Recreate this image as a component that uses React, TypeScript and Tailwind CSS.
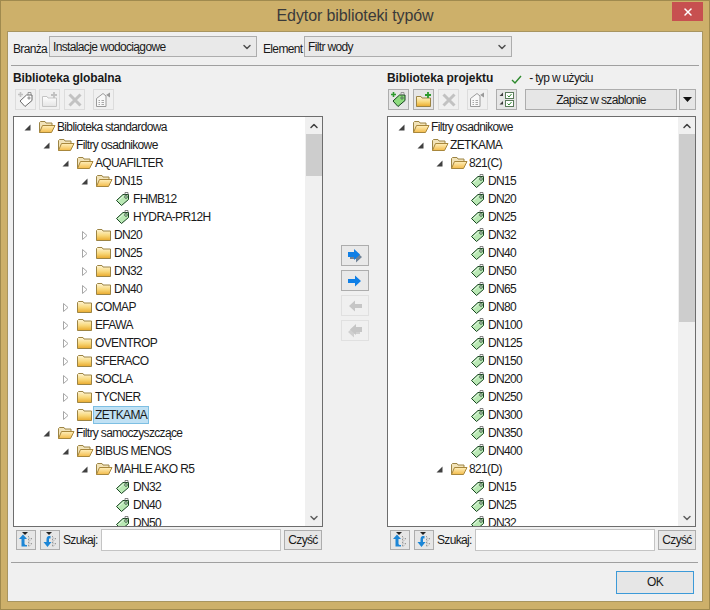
import React from "react";
import { ChevronDown, ChevronUp, X } from "lucide-react";

type Row = {
  level: number;
  label: string;
  kind: "open" | "closed" | "tag";
  selected?: boolean;
};

const leftRows: Row[] = [
  { level: 0, label: "Biblioteka standardowa", kind: "open" },
  { level: 1, label: "Filtry osadnikowe", kind: "open" },
  { level: 2, label: "AQUAFILTER", kind: "open" },
  { level: 3, label: "DN15", kind: "open" },
  { level: 4, label: "FHMB12", kind: "tag" },
  { level: 4, label: "HYDRA-PR12H", kind: "tag" },
  { level: 3, label: "DN20", kind: "closed" },
  { level: 3, label: "DN25", kind: "closed" },
  { level: 3, label: "DN32", kind: "closed" },
  { level: 3, label: "DN40", kind: "closed" },
  { level: 2, label: "COMAP", kind: "closed" },
  { level: 2, label: "EFAWA", kind: "closed" },
  { level: 2, label: "OVENTROP", kind: "closed" },
  { level: 2, label: "SFERACO", kind: "closed" },
  { level: 2, label: "SOCLA", kind: "closed" },
  { level: 2, label: "TYCNER", kind: "closed" },
  { level: 2, label: "ZETKAMA", kind: "closed", selected: true },
  { level: 1, label: "Filtry samoczyszczące", kind: "open" },
  { level: 2, label: "BIBUS MENOS", kind: "open" },
  { level: 3, label: "MAHLE AKO R5", kind: "open" },
  { level: 4, label: "DN32", kind: "tag" },
  { level: 4, label: "DN40", kind: "tag" },
  { level: 4, label: "DN50", kind: "tag" },
];

const tagsC = ["DN15", "DN20", "DN25", "DN32", "DN40", "DN50", "DN65", "DN80", "DN100", "DN125", "DN150", "DN200", "DN250", "DN300", "DN350", "DN400"];

const rightRows: Row[] = [
  { level: 0, label: "Filtry osadnikowe", kind: "open" },
  { level: 1, label: "ZETKAMA", kind: "open" },
  { level: 2, label: "821(C)", kind: "open" },
  ...tagsC.map((label) => ({ level: 3, label, kind: "tag" as const })),
  { level: 2, label: "821(D)", kind: "open" },
  { level: 3, label: "DN15", kind: "tag" },
  { level: 3, label: "DN25", kind: "tag" },
  { level: 3, label: "DN32", kind: "tag" },
];

// shared gradients for the folder drawings
const SvgDefs = () => (
  <svg width="0" height="0" className="block h-0 w-0">
    <defs>
      <linearGradient id="folderBody" x1="0" y1="0" x2="0" y2="1">
        <stop offset="0" stopColor="#fff6d8" />
        <stop offset="0.55" stopColor="#f8d778" />
        <stop offset="1" stopColor="#e9a92c" />
      </linearGradient>
      <linearGradient id="folderFront" x1="0" y1="0" x2="0" y2="1">
        <stop offset="0" stopColor="#fff0bd" />
        <stop offset="1" stopColor="#f3bb4a" />
      </linearGradient>
      <linearGradient id="folderPale" x1="0" y1="0" x2="0" y2="1">
        <stop offset="0" stopColor="#ffffff" />
        <stop offset="1" stopColor="#e4e4e4" />
      </linearGradient>
    </defs>
  </svg>
);

const FolderOpen = () => (
  <svg width="18" height="16" viewBox="0 0 18 16">
    <path d="M1.5 13.5V3.5L2.5 2.5H7L8 4H14V6.5" fill="#f2e3b8" stroke="#9c8444" />
    <path d="M1.5 13.5L4.5 6.5H17L13.5 13.5Z" fill="url(#folderFront)" stroke="#a8873c" />
  </svg>
);

const FolderClosed = () => (
  <svg width="18" height="16" viewBox="0 0 18 16">
    <path d="M1.5 13.5V3.5L2.5 2.5H7L8 4H15.5V13.5Z" fill="url(#folderBody)" stroke="#9c8444" />
  </svg>
);

const TagIcon = () => (
  <svg width="16" height="16" viewBox="0 0 16 16">
    <path d="M1.5 9.5L8 3.5H13.5V8.5L6.5 14.5Z" fill="#b9e8b4" stroke="#16441f" />
    <path d="M3.5 9.5L8.5 5" stroke="#eaffea" />
    <circle cx="11" cy="6" r="1.3" fill="#fff" stroke="#16441f" strokeWidth="0.8" />
    <path d="M10 4.5V1.5H13V4.5" fill="none" stroke="#666" strokeWidth="0.8" />
  </svg>
);

const TreeRow = ({ row }: { row: Row }) => (
  <div className="flex h-[18px] shrink-0 items-center" style={{ paddingLeft: row.level * 19 }}>
    <span className="flex w-[24px] shrink-0 items-center justify-end pr-[7px]">
      {row.kind === "open" && (
        <svg width="7" height="7" viewBox="0 0 7 7">
          <path d="M6.5 0.5V6.5H0.5Z" fill="#404040" />
        </svg>
      )}
      {row.kind === "closed" && (
        <svg width="6" height="9" viewBox="0 0 6 9">
          <path d="M0.5 0.5L5 4.5L0.5 8.5Z" fill="#fff" stroke="#a6a6a6" />
        </svg>
      )}
    </span>
    <span className="flex w-[18px] shrink-0 justify-center">
      {row.kind === "open" && <FolderOpen />}
      {row.kind === "closed" && <FolderClosed />}
      {row.kind === "tag" && <TagIcon />}
    </span>
    <span
      className={
        row.selected
          ? "-ml-px flex h-[18px] items-center whitespace-nowrap border border-[#7dbfe3] bg-[#c0e1f4] pl-px pr-px"
          : "whitespace-nowrap pl-px"
      }
    >
      {row.label}
    </span>
  </div>
);

const ScrollTrack = ({ thumb }: { thumb: string }) => (
  <div className="flex w-[17px] shrink-0 flex-col items-center bg-[#f0f0f0]">
    <div className="flex h-[17px] w-full shrink-0 items-center justify-center text-[#404040]">
      <ChevronUp size={12} strokeWidth={3} />
    </div>
    <div className={thumb} />
    <div className="flex-1" />
    <div className="flex h-4 w-full shrink-0 items-center justify-center text-[#606060]">
      <ChevronDown size={12} strokeWidth={3} />
    </div>
  </div>
);

const Tree = ({ rows, thumb }: { rows: Row[]; thumb: string }) => (
  <div className="flex h-[411px] overflow-hidden border border-[#6d6d6d] bg-white">
    <div className="flex min-w-0 flex-1 flex-col overflow-hidden pt-px">
      {rows.map((row, i) => (
        <TreeRow key={i} row={row} />
      ))}
    </div>
    <ScrollTrack thumb={thumb} />
  </div>
);

const ToolButton = ({
  children,
  active,
  className = "",
}: {
  children: React.ReactNode;
  active?: boolean;
  className?: string;
}) => (
  <div
    className={`flex h-[21px] w-[21px] shrink-0 items-center justify-center border ${
      active ? "border-[#adadad] bg-[#e6e6e6]" : "border-[#dcdcdc] bg-[#f0f0f0]"
    } ${className}`}
  >
    {children}
  </div>
);

const TagPlus = ({ on }: { on: boolean }) => (
  <svg width="17" height="17" viewBox="0 0 17 17">
    <path d="M3 10L9.5 4H15V9.5L8 15.5Z" fill={on ? "#8edb7e" : "#fff"} stroke={on ? "#16441f" : "#6a6a6a"} />
    <circle cx="12" cy="7" r="1.1" fill="#fff" stroke={on ? "#16441f" : "#6a6a6a"} strokeWidth="0.8" />
    <path d="M11 4V1.5H14V4" fill="none" stroke="#888" strokeWidth="0.8" />
    <path d="M3.5 1V6M1 3.5H6" stroke={on ? "#2d9a2d" : "#c0c0c0"} strokeWidth="1.6" />
  </svg>
);

const FolderPlus = ({ on }: { on: boolean }) => (
  <svg width="18" height="17" viewBox="0 0 18 17">
    <path
      d="M1.5 15.5V5.5H6L7 7H15.5V15.5Z"
      fill={on ? "url(#folderBody)" : "url(#folderPale)"}
      stroke={on ? "#9c8444" : "#c4c4c4"}
    />
    <path d="M13 1V7M10 4H16" stroke={on ? "#2d9a2d" : "#c0c0c0"} strokeWidth="1.8" />
  </svg>
);

const CrossIcon = () => (
  <svg width="16" height="16" viewBox="0 0 16 16">
    <path d="M2.5 2.5L13.5 13.5M13.5 2.5L2.5 13.5" stroke="#c2c2c2" strokeWidth="3" />
  </svg>
);

const PropsIcon = () => (
  <svg width="17" height="17" viewBox="0 0 17 17">
    <path d="M1.5 7.5L8 2.5L11 5V15.5H1.5Z" fill="#f8f8f8" stroke="#9a9a9a" />
    <path d="M3.5 9.5H5M6.5 9.5H9M3.5 11.5H5M6.5 11.5H9M3.5 13.5H5M6.5 13.5H9" stroke="#a8a8a8" />
    <path d="M11 4L15 1.5V6.5Z" fill="#9a9a9a" />
  </svg>
);

const ChecklistIcon = () => (
  <svg width="17" height="17" viewBox="0 0 17 17">
    <path d="M5 1.5V5H1.5Z" fill="#404040" />
    <path d="M5 10V13.5H1.5Z" fill="#404040" />
    <rect x="7.5" y="1.5" width="8" height="6" fill="#fff" stroke="#5a7a5a" />
    <rect x="7.5" y="9.5" width="8" height="6" fill="#fff" stroke="#5a7a5a" />
    <path d="M9.5 4.5L11 6L13.5 3M9.5 12.5L11 14L13.5 11" fill="none" stroke="#2d8a2d" />
  </svg>
);

const SortIcon = ({ down }: { down?: boolean }) => (
  <svg width="18" height="18" viewBox="0 0 18 18">
    <path d="M5 1H11L8 4Z" fill="#222" />
    <path d="M11.5 5V6M11.5 8V9M11.5 11V12M11.5 14V15M14.5 7V8M14.5 12V13" stroke="#999" />
    <path d="M12 6.5L14 8.5L12 10.5Z M12 11.5L14 13.5L12 15.5Z" fill="#fff" stroke="#999" strokeWidth="0.6" />
    {down ? (
      <path d="M8.5 5C5.5 5 5.5 7 5.5 11H2.5L6.5 16L10.5 11H8V7.5H9.5V5Z" fill="#1c86d6" />
    ) : (
      <path d="M4.5 15.5V8H2L6 3.5L10 8H7.5V12.5C7.5 13.5 8.5 14 10 14V15.5Z" fill="#1c86d6" />
    )}
  </svg>
);

const SearchBar = () => (
  <div className="mt-[2px] flex h-[22px] items-center">
    <div className="ml-[3px] flex gap-1">
      <ToolButton active className="!h-5 !w-5">
        <SortIcon />
      </ToolButton>
      <ToolButton active className="!h-5 !w-5">
        <SortIcon down />
      </ToolButton>
    </div>
    <span className="ml-[3px] w-[38px] shrink-0">Szukaj:</span>
    <div className="h-[22px] w-[180px] shrink-0 border border-[#c4c4c4] bg-white" />
    <div className="ml-[3px] flex h-5 w-[38px] shrink-0 items-center justify-center border border-[#adadad] bg-[#e6e6e6]">
      Czyść
    </div>
  </div>
);

const Combo = ({ value, width }: { value: string; width: string }) => (
  <div className={`flex h-[21px] items-center justify-between border border-[#adadad] bg-[#e9e9e9] pl-[3px] pr-[3px] ${width}`}>
    <span>{value}</span>
    <ChevronDown size={12} strokeWidth={3} className="text-[#505050]" />
  </div>
);

const ArrowButton = ({ on, double, left }: { on: boolean; double?: boolean; left?: boolean }) => (
  <div
    className={`flex h-[21px] w-7 items-center justify-center border ${
      on ? "border-[#adadad] bg-[#e9e9e9]" : "border-[#e0e0e0] bg-[#f0f0f0]"
    }`}
  >
    <svg width="16" height="16" viewBox="0 0 16 16" className={left ? "-scale-x-100" : ""}>
      {double && <path d="M3 7H9V3.5L15 9L9 14.5V11H3Z" fill={on ? "#6f8296" : "#d0d0d0"} />}
      <path
        d={double ? "M1 4H7V1L13 6.5L7 12V9H1Z" : "M1 6H8V2.5L14 8L8 13.5V10H1Z"}
        fill={on ? "#0f7fe6" : "#c6c6c6"}
      />
    </svg>
  </div>
);

export default function App() {
  return (
    <div
      className="flex h-[610px] w-[710px] flex-col overflow-hidden border border-[#a08a4e] bg-[#cdb06a] text-[12px] leading-none tracking-[-0.65px] text-[#1a1a1a]"
      style={{ fontFamily: '"Liberation Sans", Arial, sans-serif' }}
    >
      <SvgDefs />
      {/* Title bar */}
      <div className="flex h-[30px] shrink-0 items-start">
        <div className="flex-1 pt-[7px] pl-[37px] text-center text-[16px] tracking-[-0.1px] text-[#3a3a3a]">
          Edytor biblioteki typów
        </div>
        <div className="mr-[6px] mt-px flex h-[19px] w-[31px] items-center justify-center bg-[#c75050] text-white">
          <X size={12} strokeWidth={3} />
        </div>
      </div>

      {/* Client area */}
      <div className="mx-[6px] flex h-[571px] flex-col border border-[#a89560] bg-[#f0f0f0]">
        <div className="mx-[3px] flex h-[34px] shrink-0 items-end border-b border-[#a0a0a0] pb-[8px] pl-[2px]">
          <span className="w-[36px] self-center pt-[8px]">Branża</span>
          <Combo value="Instalacje wodociągowe" width="w-[208px]" />
          <span className="ml-[6px] w-[41px] self-center pt-[8px]">Element</span>
          <Combo value="Filtr wody" width="w-[208px]" />
        </div>

        <div className="flex flex-1 pl-[5px]">
          {/* Left library */}
          <div className="w-[310px] shrink-0">
            <div className="flex h-[23px] items-center pt-[1px] font-bold tracking-[-0.1px]">Biblioteka globalna</div>
            <div className="flex h-[21px] items-center">
              <ToolButton className="ml-[2px]"><TagPlus on={false} /></ToolButton>
              <ToolButton className="ml-[3px]"><FolderPlus on={false} /></ToolButton>
              <ToolButton className="ml-[4px]"><CrossIcon /></ToolButton>
              <ToolButton className="ml-[8px]"><PropsIcon /></ToolButton>
            </div>
            <div className="mt-[6px]">
              <Tree rows={leftRows} thumb="h-[42px] w-[16px] shrink-0 bg-[#cdcdcd]" />
            </div>
            <SearchBar />
          </div>

          {/* Transfer buttons */}
          <div className="flex w-[64px] shrink-0 flex-col items-center gap-[4px] pt-[179px]">
            <ArrowButton on double />
            <ArrowButton on />
            <ArrowButton on={false} left />
            <ArrowButton on={false} double left />
          </div>

          {/* Right library */}
          <div className="w-[309px] shrink-0">
            <div className="flex h-[23px] items-center pt-[1px]">
              <span className="font-bold tracking-[-0.1px]">Biblioteka projektu</span>
              <svg width="11" height="11" viewBox="0 0 11 11" className="ml-[18px] mt-[3px]">
                <path d="M1 6L4 9L10 2" fill="none" stroke="#2d8a2d" strokeWidth="1.4" />
              </svg>
              <span className="ml-[7px]">- typ w użyciu</span>
            </div>
            <div className="flex h-[21px] items-center">
              <ToolButton active className="ml-[1px]"><TagPlus on /></ToolButton>
              <ToolButton active className="ml-[4px]"><FolderPlus on /></ToolButton>
              <ToolButton className="ml-[4px]"><CrossIcon /></ToolButton>
              <ToolButton className="ml-[8px]"><PropsIcon /></ToolButton>
              <ToolButton active className="ml-[8px]"><ChecklistIcon /></ToolButton>
              <div className="ml-[8px] flex h-[21px] w-[152px] items-center justify-center border border-[#adadad] bg-[#e6e6e6]">
                Zapisz w szablonie
              </div>
              <div className="ml-[2px] flex h-[21px] w-[17px] items-center justify-center border border-[#adadad] bg-[#e6e6e6]">
                <svg width="9" height="5" viewBox="0 0 9 5">
                  <path d="M0 0H9L4.5 5Z" fill="#111" />
                </svg>
              </div>
            </div>
            <div className="mt-[6px]">
              <Tree rows={rightRows} thumb="h-[188px] w-[16px] shrink-0 bg-[#cdcdcd]" />
            </div>
            <SearchBar />
          </div>
        </div>

        {/* Footer */}
        <div className="ml-[3px] mr-[4px] flex h-[39px] shrink-0 items-center justify-end border-t border-[#a0a0a0] pr-[4px]">
          <div className="flex h-[23px] w-[78px] items-center justify-center border border-[#3c9ad8] bg-[#e6e6e6]">OK</div>
        </div>
      </div>
    </div>
  );
}
